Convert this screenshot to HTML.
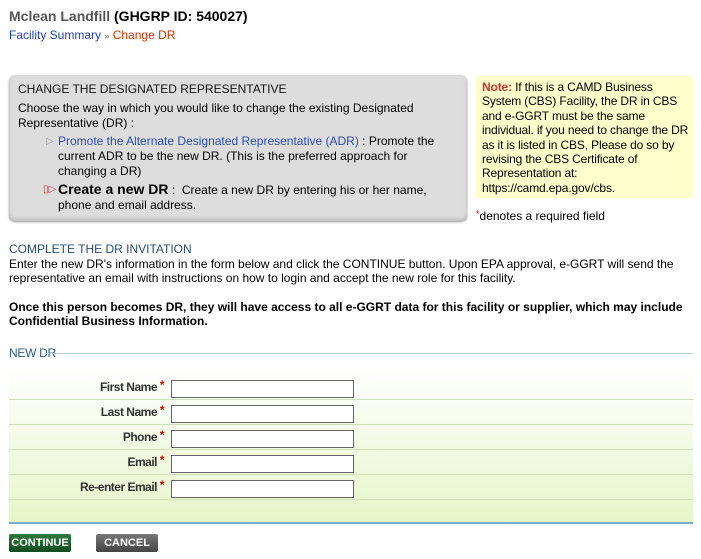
<!DOCTYPE html>
<html><head><style>
*{margin:0;padding:0;box-sizing:border-box}
body{width:701px;height:559px;font-family:"Liberation Sans",Arial,sans-serif;font-size:12px;color:#000;background:#fff;position:relative;overflow:hidden}
.a{position:absolute}
.t{left:9px;top:8px;font-size:14px;font-weight:bold}
.t span{color:#555}
.bc{left:9px;top:28px;font-size:12px;color:#2244aa}
.bc b{color:#888;font-size:9px}
.bc i{font-style:normal;color:#cc3300}
.box{left:9px;top:76px;width:458px;height:146px;background:#ddd;border-radius:6px;box-shadow:0 0 2px #999,inset 0 -3px 3px #bbb;padding:6px 9px;line-height:15px}
.box h3{font-size:12px;font-weight:normal;margin-bottom:4px;color:#111}
.opt{padding-left:40px;position:relative}
.blue{color:#2a4fb5}
.note{left:476px;top:76px;width:217px;height:122px;background:#ffffcc;padding:4px 1px 4px 6px;line-height:14.4px;letter-spacing:-.15px}
.req{left:476px;top:209px}
.h2{left:9px;top:242px;color:#2a4d6e;font-size:12px}
.p{left:9px;top:257px;line-height:14px;width:680px}
.pb{left:9px;top:300px;line-height:14px;font-weight:bold}
.nd{left:9px;top:346px;color:#2a5a85;font-size:12px;letter-spacing:-.3px}
.ln{left:45px;top:353px;width:648px;height:1px;background:#b8d0dc}
.form{left:9px;top:367px;width:684px;height:157px;background:linear-gradient(#fff,#e7f5c9);border-bottom:2px solid #7aaccf}
.row{position:absolute;left:0;width:684px;height:25px;border-bottom:1px solid #cfe0b8}
.row label{position:absolute;right:536px;top:5px;font-weight:bold;color:#333;letter-spacing:-.5px}
.row label s{text-decoration:none;color:#c00;position:absolute;right:-7px;top:-2px}
.row input{position:absolute;left:162px;top:5px;width:183px;height:18px;border:1px solid #666;background:#fff}
.btn{top:534px;height:18px;color:#fff;font-weight:bold;font-size:11px;text-align:center;line-height:18px;border-radius:2px}
</style></head><body>
<div class="a t"><span>Mclean Landfill</span> (GHGRP ID: 540027)</div>
<div class="a bc">Facility Summary <b>»</b> <i>Change DR</i></div>
<div class="a box">
<h3>CHANGE THE DESIGNATED REPRESENTATIVE</h3>
<div>Choose the way in which you would like to change the existing Designated Representative (DR) :</div>
<div class="opt" style="margin-top:3px"><span style="position:absolute;left:28px;color:#999;font-size:10px">▷</span><span class="blue">Promote the Alternate Designated Representative (ADR)</span> : Promote the current ADR to be the new DR. (This is the preferred approach for changing a DR)</div>
<div class="opt" style="margin-top:3px"><span style="position:absolute;left:25px;color:#c33;font-size:10px">▯▷</span><b style="font-size:14px">Create a new DR</b> :&nbsp; Create a new DR by entering his or her name, phone and email address.</div>
</div>
<div class="a note"><b style="color:#c33">Note:</b> If this is a CAMD Business System (CBS) Facility, the DR in CBS and e-GGRT must be the same individual. if you need to change the DR as it is listed in CBS, Please do so by revising the CBS Certificate of Representation at: https://camd.epa.gov/cbs.</div>
<div class="a req"><span style="color:#c00;font-size:9px;vertical-align:top">*</span>denotes a required field</div>
<div class="a h2">COMPLETE THE DR INVITATION</div>
<div class="a p">Enter the new DR's information in the form below and click the CONTINUE button. Upon EPA approval, e-GGRT will send the representative an email with instructions on how to login and accept the new role for this facility.</div>
<div class="a pb">Once this person becomes DR, they will have access to all e-GGRT data for this facility or supplier, which may include<br>Confidential Business Information.</div>
<div class="a nd">NEW DR</div>
<div class="a ln"></div>
<div class="a form">
<div class="row" style="top:8px"><label>First Name<s>*</s></label><input></div>
<div class="row" style="top:33px"><label>Last Name<s>*</s></label><input></div>
<div class="row" style="top:58px"><label>Phone<s>*</s></label><input></div>
<div class="row" style="top:83px"><label>Email<s>*</s></label><input></div>
<div class="row" style="top:108px"><label>Re-enter Email<s>*</s></label><input></div>
</div>
<div class="a btn" style="left:9px;width:62px;background:linear-gradient(#2e7a3e,#114d20)">CONTINUE</div>
<div class="a btn" style="left:96px;width:62px;background:linear-gradient(#777,#444)">CANCEL</div>
</body></html>
